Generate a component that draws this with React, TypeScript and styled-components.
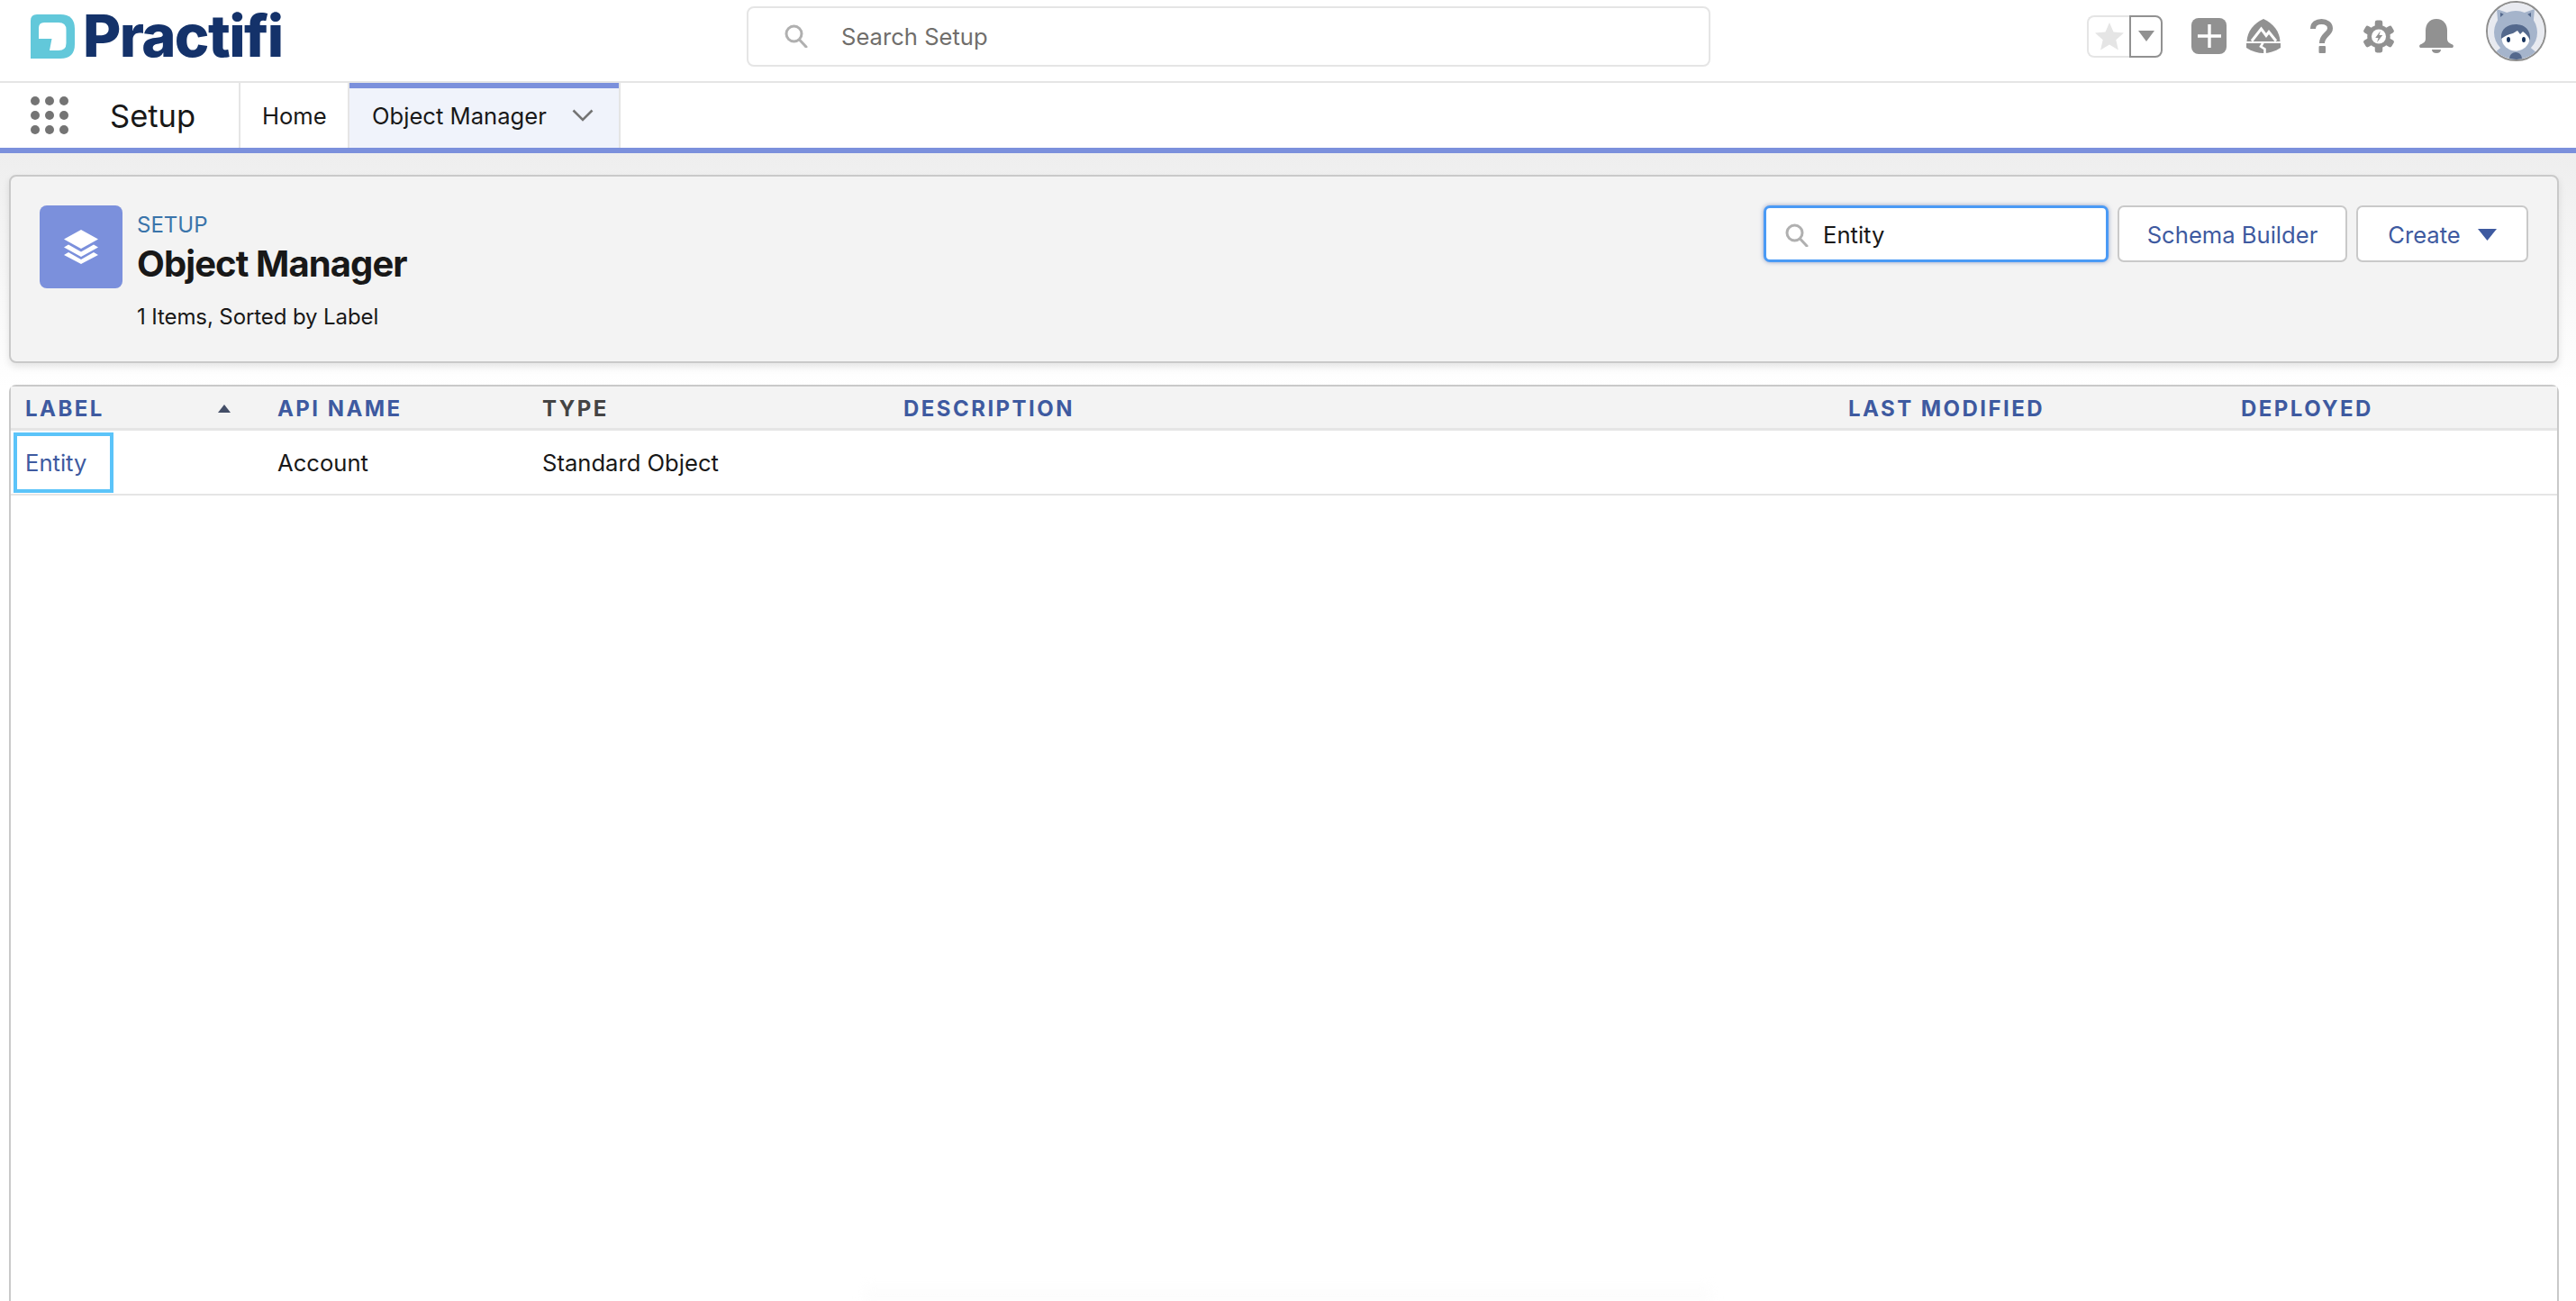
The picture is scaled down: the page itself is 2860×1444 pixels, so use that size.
import styled, { createGlobalStyle } from "styled-components";

const GlobalStyle = createGlobalStyle`
  html, body {
    margin: 0;
    padding: 0;
    background: #fff;
  }
  body {
    font-family: Inter, "Liberation Sans", sans-serif;
    color: #181818;
    overflow: hidden;
  }
`;

const COLUMNS = "296px 294px 401px 1049px 436px 1fr";
const columns = [
  { label: "API NAME" },
  { label: "TYPE", dark: true },
  { label: "DESCRIPTION" },
  { label: "LAST MODIFIED" },
  { label: "DEPLOYED" },
];

function SearchGlyph() {
  return (
    <svg width="26" height="26" viewBox="0 0 26 26" fill="none">
      <circle cx="10.5" cy="10.5" r="8.5" stroke="#b0b0b0" strokeWidth="3" />
      <path d="M16.5 17 L24 25" stroke="#b0b0b0" strokeWidth="3" strokeLinecap="round" />
    </svg>
  );
}

function LogoMark() {
  return (
    <svg width="49" height="49" viewBox="0 0 49 49">
      <path
        d="M7 0 H33 Q49 0 49 16 V33 Q49 49 33 49 H0 V7 Q0 0 7 0 Z"
        fill="#62c8da"
      />
      <path
        d="M15 9 H31 Q39.5 9 39.5 17 V32 Q39.5 40 31 40 H21 L23.5 27 L9 27 V15 Q9 9 15 9 Z"
        fill="#fff"
      />
    </svg>
  );
}

function TrailheadGlyph() {
  return (
    <svg width="38" height="38" viewBox="0 0 38 38">
      <path d="M0.5 25 C1 14 8 5 19 0 C30 5 37 14 37.5 25 Z" fill="#919191" />
      <path
        d="M6 24.5 L16.5 11 L22 18.5 L25 14.5 L33 24.5"
        fill="none"
        stroke="#fff"
        strokeWidth="3"
      />
      <path
        d="M0 27 H38 V32 C32 36 25 38 19 38 C13 38 6 36 0 32 Z"
        fill="#919191"
      />
      <path d="M18.5 26.5 L16 30.5 L20.5 33.5 L20.5 38" fill="none" stroke="#fff" strokeWidth="2.6" />
    </svg>
  );
}

function GearGlyph() {
  const teeth = [0, 60, 120, 180, 240, 300];
  return (
    <svg width="34" height="37" viewBox="0 0 36 38">
      {teeth.map((deg) => (
        <rect
          key={deg}
          x="13.5"
          y="0"
          width="9"
          height="11"
          rx="2.5"
          fill="#919191"
          transform={`rotate(${deg} 18 19)`}
        />
      ))}
      <circle cx="18" cy="19" r="13.5" fill="#919191" />
      <circle cx="18" cy="19" r="8.5" fill="#fff" />
      <path d="M20 12.5 L14 20.5 H17.5 L16 26 L22.5 17.5 H18.5 Z" fill="#919191" />
    </svg>
  );
}

function AvatarGlyph() {
  return (
    <svg width="63" height="63" viewBox="0 0 63 63">
      <circle cx="31.5" cy="31.5" r="31.5" fill="#e8eaf0" />
      <path d="M10 7 L27 13 L12 30 Z" fill="#a5b4cb" />
      <path d="M52 7 L35 13 L50 30 Z" fill="#a5b4cb" />
      <path d="M14 11 L22 15 L14 23 Z" fill="#54698d" />
      <path d="M48 11 L40 15 L48 23 Z" fill="#54698d" />
      <ellipse cx="31" cy="33" rx="24" ry="24" fill="#a5b4cb" />
      <path d="M7 56 L18 47 H44 L55 56 C48 61 40 63 31 63 C22 63 14 61 7 56 Z" fill="#a5b4cb" />
      <ellipse cx="31" cy="39" rx="15.5" ry="14.5" fill="#fff" />
      <path
        d="M15 40 C14 30 21 24 31 24 C42 24 48 31 47 42 C45 37 42 34 39 32 L36 35 L33 31 L28 34 C23 35 19 37 15 40 Z"
        fill="#54698d"
      />
      <ellipse cx="23" cy="41" rx="2" ry="3" fill="#16325c" />
      <ellipse cx="40" cy="41" rx="2" ry="3" fill="#16325c" />
      <circle cx="31" cy="62" r="7" fill="#54698d" />
    </svg>
  );
}

export default function App() {
  return (
    <Page>
      <GlobalStyle />
      <TopBar>
        <Logo>
          <LogoMark />
          <LogoText>Practifi</LogoText>
        </Logo>
        <GlobalSearch>
          <SearchGlyph />
          <GlobalSearchText>Search Setup</GlobalSearchText>
        </GlobalSearch>
        <Actions>
          <Favorites>
            <FavoriteStar>
              <svg width="32" height="31" viewBox="0 0 32 31">
                <path
                  d="M16 0 L20.5 10.6 L32 11.6 L23.3 19.2 L25.9 30.5 L16 24.5 L6.1 30.5 L8.7 19.2 L0 11.6 L11.5 10.6 Z"
                  fill="#e5e5e5"
                />
              </svg>
            </FavoriteStar>
            <FavoriteMenu>
              <svg width="18" height="12" viewBox="0 0 18 12">
                <path d="M0 0 H18 L9 12 Z" fill="#919191" />
              </svg>
            </FavoriteMenu>
          </Favorites>
          <PlusTile>
            <svg width="28" height="28" viewBox="0 0 28 28">
              <path d="M14 1 V27 M1 14 H27" stroke="#fff" strokeWidth="3.4" />
            </svg>
          </PlusTile>
          <IconSlot $width={38} $gap={33}>
            <TrailheadGlyph />
          </IconSlot>
          <IconSlot $width={25} $gap={34}>
            <svg width="25" height="38" viewBox="0 0 25 38">
              <path
                d="M3 11 C3 5.5 7 3 12.5 3 C18 3 22 6 22 10.5 C22 17 13 17.5 13 27"
                fill="none"
                stroke="#919191"
                strokeWidth="6"
              />
              <rect x="9.5" y="30" width="7.5" height="8" rx="1" fill="#919191" />
            </svg>
          </IconSlot>
          <IconSlot $width={34} $gap={28}>
            <GearGlyph />
          </IconSlot>
          <IconSlot $width={38} $gap={36}>
            <svg width="38" height="38" viewBox="0 0 38 38">
              <path
                d="M19 0 C27 0 31 6 31 13 V22 C31 26 34 27 37 28.5 C38.5 29.5 38 32 36 32 H2 C0 32 -0.5 29.5 1 28.5 C4 27 7 26 7 22 V13 C7 6 11 0 19 0 Z"
                fill="#919191"
              />
              <path d="M14 34 H24 C24 36.5 22 38 19 38 C16 38 14 36.5 14 34 Z" fill="#919191" />
            </svg>
          </IconSlot>
          <Avatar>
            <AvatarGlyph />
          </Avatar>
        </Actions>
      </TopBar>

      <NavBar>
        <AppSection>
          <Launcher>
            {Array.from({ length: 9 }, (_, i) => (
              <LauncherDot key={i} />
            ))}
          </Launcher>
          <AppName>Setup</AppName>
        </AppSection>
        <NavTab>Home</NavTab>
        <NavTab $active>
          <span>Object Manager</span>
          <svg width="24" height="14" viewBox="0 0 24 14" fill="none">
            <path d="M1.5 1.5 L12 12 L22.5 1.5" stroke="#747474" strokeWidth="2.6" />
          </svg>
        </NavTab>
      </NavBar>

      <Content>
        <HeaderPanel>
          <TitleGroup>
            <ObjectTile>
              <svg width="38" height="38" viewBox="0 0 38 38">
                <path d="M19 0 L38 10.5 L19 21 L0 10.5 Z" fill="#fff" />
                <path d="M5 16.5 L19 24.5 L33 16.5 L38 19.5 L19 30 L0 19.5 Z" fill="#fff" />
                <path d="M5 25 L19 33 L33 25 L38 28 L19 38 L0 28 Z" fill="#fff" />
              </svg>
            </ObjectTile>
            <TitleText>
              <Eyebrow>SETUP</Eyebrow>
              <Title>Object Manager</Title>
              <Summary>1 Items, Sorted by Label</Summary>
            </TitleText>
          </TitleGroup>
          <HeaderControls>
            <QuickFind>
              <SearchGlyph />
              <QuickFindValue>Entity</QuickFindValue>
            </QuickFind>
            <OutlineButton $width={255}>Schema Builder</OutlineButton>
            <OutlineButton $width={191}>
              Create
              <svg width="21" height="13" viewBox="0 0 21 13">
                <path d="M0 0 H21 L10.5 13 Z" fill="#3e5aa0" />
              </svg>
            </OutlineButton>
          </HeaderControls>
        </HeaderPanel>

        <TablePanel>
          <TableHead>
            <LabelHeader>
              LABEL
              <svg width="14" height="9" viewBox="0 0 14 9">
                <path d="M7 0 L14 9 H0 Z" fill="#444e67" />
              </svg>
            </LabelHeader>
            {columns.map((col) => (
              <HeadCell key={col.label} $dark={col.dark}>
                {col.label}
              </HeadCell>
            ))}
          </TableHead>
          <TableRow>
            <LabelCell>
              <FocusedLink>Entity</FocusedLink>
            </LabelCell>
            <BodyCell>Account</BodyCell>
            <BodyCell>Standard Object</BodyCell>
          </TableRow>
        </TablePanel>
      </Content>
      <BottomFade />
    </Page>
  );
}

const Page = styled.div`
  position: relative;
  display: flex;
  flex-direction: column;
  width: 2860px;
  height: 1444px;
  overflow: hidden;
  background: #fff;
`;

const TopBar = styled.header`
  display: grid;
  grid-template-columns: 829px 1070px 1fr;
  align-items: center;
  height: 80px;
  padding-bottom: 10px;
  border-bottom: 2px solid #e5e5e5;
`;

const Logo = styled.div`
  display: flex;
  align-items: center;
  gap: 9px;
  padding-left: 34px;
`;

const LogoText = styled.span`
  font-size: 65px;
  line-height: 66px;
  font-weight: 800;
  letter-spacing: -1.6px;
  color: #14326a;
`;

const GlobalSearch = styled.div`
  display: flex;
  align-items: center;
  gap: 37px;
  height: 67px;
  box-sizing: border-box;
  padding: 0 0 0 40px;
  border: 2px solid #e5e5e5;
  border-radius: 8px;
`;

const GlobalSearchText = styled.span`
  font-size: 25.6px;
  color: #706e6b;
`;

const Actions = styled.div`
  display: flex;
  align-items: center;
  justify-content: flex-end;
  padding-right: 33px;
`;

const Favorites = styled.div`
  display: flex;
  height: 47px;
  margin-right: 32px;
`;

const FavoriteStar = styled.div`
  display: flex;
  align-items: center;
  justify-content: center;
  width: 47px;
  box-sizing: border-box;
  border: 2px solid #e5e5e5;
  border-right: none;
  border-radius: 8px 0 0 8px;
`;

const FavoriteMenu = styled.div`
  display: flex;
  align-items: center;
  justify-content: center;
  width: 37px;
  box-sizing: border-box;
  border: 2px solid #919191;
  border-radius: 0 8px 8px 0;
`;

const PlusTile = styled.div`
  display: flex;
  align-items: center;
  justify-content: center;
  width: 39px;
  height: 40px;
  margin-right: 22px;
  border-radius: 8px;
  background: #919191;
`;

const IconSlot = styled.div<{ $width: number; $gap: number }>`
  display: flex;
  width: ${(p) => p.$width}px;
  margin-right: ${(p) => p.$gap}px;
`;

const Avatar = styled.div`
  width: 63px;
  height: 63px;
  margin-bottom: 11px;
  border: 2px solid #8f8f8f;
  border-radius: 50%;
  overflow: hidden;
`;

const NavBar = styled.nav`
  display: flex;
  height: 72px;
  border-bottom: 6px solid #7b90dc;
`;

const AppSection = styled.div`
  display: flex;
  align-items: center;
  gap: 46px;
  width: 267px;
  box-sizing: border-box;
  padding-left: 34px;
  border-right: 2px solid #e5e5e5;
`;

const Launcher = styled.div`
  display: grid;
  grid-template-columns: repeat(3, 10px);
  gap: 6px;
`;

const LauncherDot = styled.span`
  width: 10px;
  height: 10px;
  border-radius: 50%;
  background: #747474;
`;

const AppName = styled.span`
  font-size: 34.5px;
  color: #181818;
`;

const NavTab = styled.div<{ $active?: boolean }>`
  display: flex;
  align-items: center;
  justify-content: space-between;
  box-sizing: border-box;
  font-size: 25.6px;
  color: #181818;
  width: ${(p) => (p.$active ? "303px" : "119px")};
  padding: ${(p) => (p.$active ? "0 28px 0 25px" : "0 0 0 24px")};
  background: ${(p) => (p.$active ? "#f0f3fb" : "#fff")};
  box-shadow: ${(p) => (p.$active ? "inset 0 6px 0 #7b90dc" : "none")};
  border-right: ${(p) => (p.$active ? "2px solid #e5e5e5" : "none")};
  border-left: ${(p) => (p.$active ? "2px solid #e5e5e5" : "none")};
`;

const Content = styled.main`
  flex: 1;
  display: flex;
  flex-direction: column;
  gap: 24px;
  min-height: 0;
  padding: 24px 19px 0 10px;
  background: linear-gradient(#eeeeee, #ffffff 260px);
`;

const HeaderPanel = styled.section`
  display: flex;
  justify-content: space-between;
  height: 209px;
  box-sizing: border-box;
  padding: 32px 32px 0 32px;
  background: #f3f3f3;
  border: 2px solid #c9c9c9;
  border-radius: 8px;
  box-shadow: 0 4px 8px rgba(0, 0, 0, 0.1);
`;

const TitleGroup = styled.div`
  display: flex;
  gap: 16px;
`;

const ObjectTile = styled.div`
  display: flex;
  align-items: center;
  justify-content: center;
  width: 92px;
  height: 92px;
  border-radius: 8px;
  background: #7b90dc;
`;

const TitleText = styled.div`
  display: flex;
  flex-direction: column;
`;

const Eyebrow = styled.span`
  font-size: 24px;
  line-height: 30px;
  margin-top: 7px;
  color: #3a74aa;
`;

const Title = styled.h1`
  margin: 4px 0 0;
  font-size: 40px;
  line-height: 48px;
  font-weight: 700;
  letter-spacing: -0.9px;
  color: #181818;
`;

const Summary = styled.span`
  margin-top: 20px;
  font-size: 24px;
  line-height: 30px;
  letter-spacing: -0.1px;
  color: #181818;
`;

const HeaderControls = styled.div`
  display: flex;
  gap: 10px;
  height: 63px;
`;

const QuickFind = styled.div`
  display: flex;
  align-items: center;
  gap: 16px;
  width: 383px;
  box-sizing: border-box;
  padding: 2px 0 0 21px;
  background: #fff;
  border: 3px solid #4a9af5;
  border-radius: 7px;
  box-shadow: 0 0 5px rgba(62, 90, 160, 0.55);
`;

const QuickFindValue = styled.span`
  font-size: 25.6px;
  color: #181818;
`;

const OutlineButton = styled.div<{ $width: number }>`
  display: flex;
  align-items: center;
  justify-content: center;
  gap: 19px;
  width: ${(p) => p.$width}px;
  box-sizing: border-box;
  padding-top: 2px;
  font-size: 25.6px;
  color: #3e5aa0;
  background: #fff;
  border: 2px solid #c9c9c9;
  border-radius: 7px;
`;

const TablePanel = styled.section`
  flex: 1;
  min-height: 0;
  background: #fff;
  border: 2px solid #c9c9c9;
  border-bottom: none;
  border-radius: 8px 8px 0 0;
`;

const TableHead = styled.div`
  display: grid;
  grid-template-columns: ${COLUMNS};
  align-items: center;
  height: 43px;
  padding-top: 3px;
  background: #f3f3f3;
  border-bottom: 3px solid #e5e5e5;
`;

const HeadCell = styled.div<{ $dark?: boolean }>`
  font-size: 24px;
  font-weight: 700;
  letter-spacing: 2.45px;
  color: ${(p) => (p.$dark ? "#444444" : "#3e5aa0")};
`;

const LabelHeader = styled(HeadCell)`
  display: flex;
  align-items: center;
  justify-content: space-between;
  padding: 0 52px 0 16px;
`;

const TableRow = styled.div`
  display: grid;
  grid-template-columns: ${COLUMNS};
  align-items: center;
  height: 70px;
  border-bottom: 2px solid #e5e5e5;
`;

const BodyCell = styled.div`
  font-size: 25.6px;
  color: #181818;
`;

const LabelCell = styled.div`
  padding-left: 3px;
`;

const FocusedLink = styled.a`
  display: flex;
  align-items: center;
  width: 111px;
  height: 67px;
  box-sizing: border-box;
  padding-left: 9px;
  font-size: 25.6px;
  color: #3e5aa0;
  border: 4px solid #5bc4f9;
`;

const BottomFade = styled.div`
  position: absolute;
  left: 960px;
  right: 960px;
  bottom: 0;
  height: 22px;
  background: linear-gradient(rgba(250, 250, 250, 0), #fbfbfb);
  filter: blur(6px);
`;
